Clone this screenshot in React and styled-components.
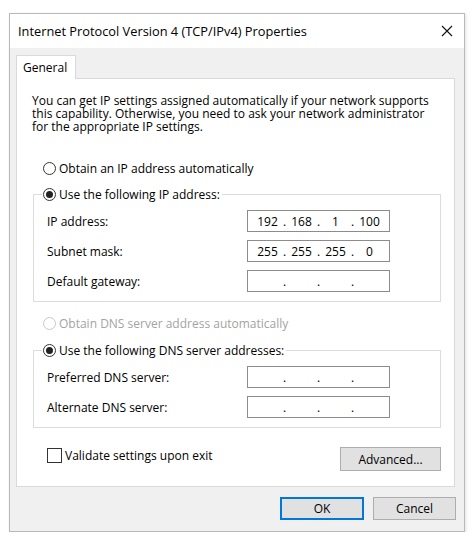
import styled, { createGlobalStyle } from 'styled-components';

const GlobalStyle = createGlobalStyle`
	html, body {
		margin: 0;
		padding: 0;
		background: #ffffff;
	}
	body {
		font-family: 'Open Sans', 'Liberation Sans', sans-serif;
		font-size: 12px;
		color: #000;
	}
`;

const Page = styled.div`
	padding: 13px 0 0 9px;
`;

const Window = styled.div`
	width: 456px;
	height: 519px;
	box-sizing: border-box;
	border: 1px solid #b9b9b9;
	background: #f0f0f0;
	box-shadow: 1px 1px 3px rgba(0, 0, 0, 0.12);
	display: flex;
	flex-direction: column;
`;

const TitleBar = styled.div`
	height: 34px;
	background: #fff;
	display: flex;
	align-items: center;
	justify-content: space-between;
	padding: 0 11px 0 8px;
	font-size: 12.8px;
`;

const CloseIcon = () => (
	<svg width='12' height='12' viewBox='0 0 12 12'>
		<path d='M1 1 L11 11 M11 1 L1 11' stroke='#111' strokeWidth='1.1' fill='none' />
	</svg>
);

const Body = styled.div`
	flex: 1;
	padding: 7px 9px 0 6px;
	display: flex;
	flex-direction: column;
`;

const TabStrip = styled.div`
	display: flex;
	margin-bottom: -1px;
	position: relative;
	z-index: 1;
`;

const Tab = styled.div`
	width: 60px;
	height: 24px;
	box-sizing: border-box;
	background: #fff;
	border: 1px solid #d9d9d9;
	border-bottom: none;
	padding: 3px 0 0 6px;
`;

const Panel = styled.div`
	background: #fff;
	border: 1px solid #d9d9d9;
	padding: 14px 13px 15px 15px;
	display: flex;
	flex-direction: column;
`;

const Intro = styled.div`
	display: flex;
	flex-direction: column;
	margin: 1px 0 27px;
`;

const IntroLine = styled.div`
	height: 13px;
	line-height: 13px;
	white-space: nowrap;
`;

const Option = styled.label`
	display: flex;
	align-items: center;
	height: 16px;
	gap: 3px;
	margin-left: ${(p) => p.$indent || 0}px;
	margin-bottom: ${(p) => p.$below || 0}px;
	color: ${(p) => (p.$disabled ? '#a3a3a3' : '#000')};
`;

const Radio = styled.span`
	width: 13px;
	height: 13px;
	box-sizing: border-box;
	border-radius: 50%;
	border: 1px solid ${(p) => (p.$disabled ? '#c8c8c8' : '#333')};
	background: #fff;
	display: flex;
	align-items: center;
	justify-content: center;

	&::after {
		content: '';
		width: 7px;
		height: 7px;
		border-radius: 50%;
		background: #222;
		display: ${(p) => (p.$checked ? 'block' : 'none')};
	}
`;

const Check = styled.span`
	width: 15px;
	height: 15px;
	box-sizing: border-box;
	border: 1px solid #333;
	background: #fff;
`;

const Group = styled.fieldset`
	margin: 0 0 ${(p) => p.$below || 0}px 1px;
	padding: 8px 0 9px 13px;
	border: 1px solid #dcdcdc;
	min-width: 0;
	display: flex;
	flex-direction: column;
	gap: 8px;

	legend {
		margin-left: -5px;
		padding: 0 2px 0 1px;
	}
`;

const FieldRow = styled.div`
	display: flex;
	align-items: center;
	height: 22px;
`;

const FieldLabel = styled.span`
	width: 200px;
`;

const IpBox = styled.div`
	width: 143px;
	height: 22px;
	box-sizing: border-box;
	border: 1px solid #8c8c8c;
	background: #fff;
	padding-left: 5px;
	display: grid;
	grid-template-columns: 29px 5px 29px 5px 29px 5px 29px;
	align-items: center;
	font-size: 12px;
`;

const Octet = styled.span`
	text-align: center;
`;

const Dot = styled.span`
	text-align: center;
`;

const Footer = styled.div`
	display: flex;
	justify-content: space-between;
	align-items: flex-start;
	margin-top: 19px;
`;

const Button = styled.button`
	font: inherit;
	color: #000;
	width: ${(p) => p.$width}px;
	height: ${(p) => p.$height || 23}px;
	box-sizing: border-box;
	background: #e1e1e1;
	border: ${(p) => (p.$primary ? '2px solid #0078d7' : '1px solid #adadad')};
	padding: 0;
	cursor: default;
`;

const Actions = styled.div`
	display: flex;
	justify-content: flex-end;
	gap: 9px;
	padding-top: 10px;
	margin-right: -1px;
`;

const IpField = ({ value }) => {
	const parts = value ? value.split('.') : ['', '', '', ''];
	return (
		<IpBox>
			{parts.flatMap((part, i) => {
				const cells = [<Octet key={'o' + i}>{part}</Octet>];
				if (i < 3) cells.push(<Dot key={'d' + i}>.</Dot>);
				return cells;
			})}
		</IpBox>
	);
};

const introLines = [
	'You can get IP settings assigned automatically if your network supports',
	'this capability. Otherwise, you need to ask your network administrator',
	'for the appropriate IP settings.',
];

const App = () => {
	return (
		<Page>
			<GlobalStyle />
			<Window>
				<TitleBar>
					<span>Internet Protocol Version 4 (TCP/IPv4) Properties</span>
					<CloseIcon />
				</TitleBar>
				<Body>
					<TabStrip>
						<Tab>General</Tab>
					</TabStrip>
					<Panel>
						<Intro>
							{introLines.map((line) => (
								<IntroLine key={line}>{line}</IntroLine>
							))}
						</Intro>

						<Option $indent={11} $below={10}>
							<Radio />
							Obtain an IP address automatically
						</Option>

						<Group $below={13}>
							<legend>
								<Option>
									<Radio $checked />
									Use the following IP address:
								</Option>
							</legend>
							<FieldRow>
								<FieldLabel>IP address:</FieldLabel>
								<IpField value='192.168.1.100' />
							</FieldRow>
							<FieldRow>
								<FieldLabel>Subnet mask:</FieldLabel>
								<IpField value='255.255.255.0' />
							</FieldRow>
							<FieldRow>
								<FieldLabel>Default gateway:</FieldLabel>
								<IpField />
							</FieldRow>
						</Group>

						<Option $indent={11} $below={11} $disabled>
							<Radio $disabled />
							Obtain DNS server address automatically
						</Option>

						<Group>
							<legend>
								<Option>
									<Radio $checked />
									Use the following DNS server addresses:
								</Option>
							</legend>
							<FieldRow>
								<FieldLabel>Preferred DNS server:</FieldLabel>
								<IpField />
							</FieldRow>
							<FieldRow>
								<FieldLabel>Alternate DNS server:</FieldLabel>
								<IpField />
							</FieldRow>
						</Group>

						<Footer>
							<Option $indent={15}>
								<Check />
								Validate settings upon exit
							</Option>
							<Button $width={101} $height={24}>
								Advanced...
							</Button>
						</Footer>
					</Panel>
					<Actions>
						<Button $primary $width={84}>
							OK
						</Button>
						<Button $width={83}>Cancel</Button>
					</Actions>
				</Body>
			</Window>
		</Page>
	);
};

export default App;
